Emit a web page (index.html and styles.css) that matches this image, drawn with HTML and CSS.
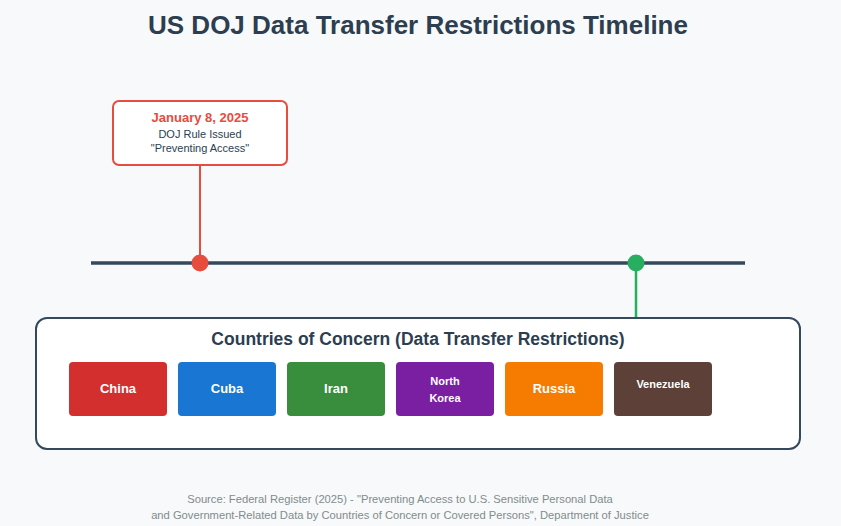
FILE: index.html
```html
<!DOCTYPE html>
<html lang="en">
<head>
<meta charset="utf-8">
<title>US DOJ Data Transfer Restrictions Timeline</title>
<link rel="stylesheet" href="styles.css">
</head>
<body>
<div class="page">
  <h1 class="title">US DOJ Data Transfer Restrictions Timeline</h1>
  <svg class="timeline" width="836" height="276" viewBox="0 41 836 276" xmlns="http://www.w3.org/2000/svg">
    <line class="axis" x1="91" y1="263" x2="745" y2="263"/>
    <line class="stem stem-red" x1="200" y1="165" x2="200" y2="263"/>
    <rect class="event-box" x="113" y="101" width="174" height="64" rx="6" ry="6"/>
    <text class="event-date" x="200" y="122">January 8, 2025</text>
    <text class="event-text" x="200" y="137.5">DOJ Rule Issued</text>
    <text class="event-text" x="200" y="152">"Preventing Access"</text>
    <circle class="dot-red" cx="200" cy="263" r="8.5"/>
    <line class="stem stem-green" x1="636" y1="263" x2="636" y2="320"/>
    <circle class="dot-green" cx="636" cy="263" r="8.5"/>
  </svg>
  <section class="panel">
    <h2 class="panel-title">Countries of Concern (Data Transfer Restrictions)</h2>
    <div class="countries">
      <div class="country country-china">China</div>
      <div class="country country-cuba">Cuba</div>
      <div class="country country-iran">Iran</div>
      <div class="country country-nk country-small">North<br>Korea</div>
      <div class="country country-russia">Russia</div>
      <div class="country country-venezuela country-small">Venezuela</div>
    </div>
  </section>
  <footer class="source">
    <p>Source: Federal Register (2025) - "Preventing Access to U.S. Sensitive Personal Data<br>and Government-Related Data by Countries of Concern or Covered Persons", Department of Justice</p>
  </footer>
</div>
</body>
</html>
```
FILE: styles.css
```css
html, body {
  margin: 0;
  padding: 0;
  background: #f8f9fa;
}

body {
  font-family: "Liberation Sans", Arial, sans-serif;
  color: #2c3e50;
}

.page {
  width: 836px;
}

.title {
  margin: 0;
  padding-top: 10px;
  font-size: 26px;
  line-height: 31px;
  font-weight: bold;
  text-align: center;
  color: #2c3e50;
}

.timeline {
  display: block;
}

.axis {
  stroke: #34495e;
  stroke-width: 3.5;
}

.stem {
  stroke-width: 2;
}

.stem-red {
  stroke: #e74c3c;
}

.stem-green {
  stroke: #27ae60;
  stroke-width: 2.5;
}

.dot-red {
  fill: #e74c3c;
}

.dot-green {
  fill: #27ae60;
}

.event-box {
  fill: #ffffff;
  stroke: #e74c3c;
  stroke-width: 2;
}

.event-date {
  font-family: "Liberation Sans", Arial, sans-serif;
  font-size: 13px;
  font-weight: bold;
  fill: #e74c3c;
  text-anchor: middle;
}

.event-text {
  font-family: "Liberation Sans", Arial, sans-serif;
  font-size: 11px;
  fill: #2c3e50;
  text-anchor: middle;
}

.panel {
  box-sizing: border-box;
  margin-left: 35px;
  width: 766px;
  height: 133px;
  border: 2px solid #34495e;
  border-radius: 12px;
  background: #ffffff;
  padding-top: 10px;
}

.panel-title {
  margin: 0;
  font-size: 17.5px;
  line-height: 20px;
  font-weight: bold;
  text-align: center;
  color: #2c3e50;
}

.countries {
  display: flex;
  gap: 11px;
  padding-left: 32px;
  margin-top: 13px;
}

.country {
  width: 98px;
  height: 54px;
  border-radius: 4px;
  display: flex;
  align-items: center;
  justify-content: center;
  text-align: center;
  color: #ffffff;
  font-size: 13px;
  font-weight: bold;
  line-height: 16px;
  box-sizing: border-box;
}

.country-small {
  font-size: 11px;
  line-height: 17px;
}

.country-china { background: #d32f2f; }
.country-cuba { background: #1976d2; }
.country-iran { background: #388e3c; }
.country-nk { background: #7b1fa2; padding-top: 1px; }
.country-russia { background: #f57c00; }
.country-venezuela { background: #5d4037; padding-bottom: 10px; }

.source {
  width: 800px;
  margin-top: 41px;
}

.source p {
  margin: 0;
  font-size: 11.2px;
  line-height: 16px;
  text-align: center;
  color: #7f8c8d;
}
```
